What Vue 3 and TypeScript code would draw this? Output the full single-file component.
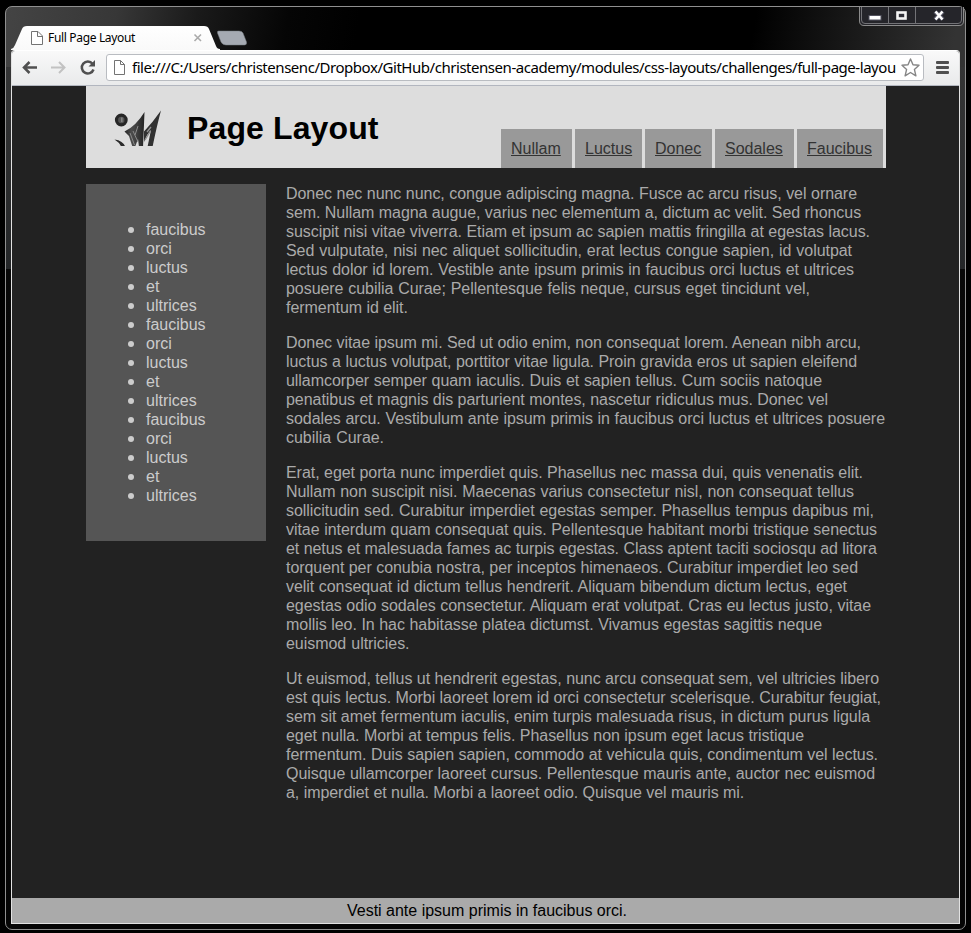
<script setup lang="ts">
interface Line { text: string; width: number }
interface NavItem { label: string; width: number }

const nav: NavItem[] = [
  { label: 'Nullam', width: 71 },
  { label: 'Luctus', width: 67 },
  { label: 'Donec', width: 67 },
  { label: 'Sodales', width: 79 },
  { label: 'Faucibus', width: 86 },
]

const words: string[] = ['faucibus', 'orci', 'luctus', 'et', 'ultrices']
const sideItems: string[] = [...words, ...words, ...words]

const paragraphs: Line[][] = [
  [
    { text: 'Donec nec nunc nunc, congue adipiscing magna. Fusce ac arcu risus, vel ornare', width: 571 },
    { text: 'sem. Nullam magna augue, varius nec elementum a, dictum ac velit. Sed rhoncus', width: 575 },
    { text: 'suscipit nisi vitae viverra. Etiam et ipsum ac sapien mattis fringilla at egestas lacus.', width: 584 },
    { text: 'Sed vulputate, nisi nec aliquet sollicitudin, erat lectus congue sapien, id volutpat', width: 566 },
    { text: 'lectus dolor id lorem. Vestible ante ipsum primis in faucibus orci luctus et ultrices', width: 568 },
    { text: 'posuere cubilia Curae; Pellentesque felis neque, cursus eget tincidunt vel,', width: 524 },
    { text: 'fermentum id elit.', width: 121 },
  ],
  [
    { text: 'Donec vitae ipsum mi. Sed ut odio enim, non consequat lorem. Aenean nibh arcu,', width: 575 },
    { text: 'luctus a luctus volutpat, porttitor vitae ligula. Proin gravida eros ut sapien eleifend', width: 571 },
    { text: 'ullamcorper semper quam iaculis. Duis et sapien tellus. Cum sociis natoque', width: 536 },
    { text: 'penatibus et magnis dis parturient montes, nascetur ridiculus mus. Donec vel', width: 542 },
    { text: 'sodales arcu. Vestibulum ante ipsum primis in faucibus orci luctus et ultrices posuere', width: 599 },
    { text: 'cubilia Curae.', width: 98 },
  ],
  [
    { text: 'Erat, eget porta nunc imperdiet quis. Phasellus nec massa dui, quis venenatis elit.', width: 577 },
    { text: 'Nullam non suscipit nisi. Maecenas varius consectetur nisl, non consequat tellus', width: 568 },
    { text: 'sollicitudin sed. Curabitur imperdiet egestas semper. Phasellus tempus dapibus mi,', width: 588 },
    { text: 'vitae interdum quam consequat quis. Pellentesque habitant morbi tristique senectus', width: 591 },
    { text: 'et netus et malesuada fames ac turpis egestas. Class aptent taciti sociosqu ad litora', width: 590 },
    { text: 'torquent per conubia nostra, per inceptos himenaeos. Curabitur imperdiet leo sed', width: 572 },
    { text: 'velit consequat id dictum tellus hendrerit. Aliquam bibendum dictum lectus, eget', width: 561 },
    { text: 'egestas odio sodales consectetur. Aliquam erat volutpat. Cras eu lectus justo, vitae', width: 585 },
    { text: 'mollis leo. In hac habitasse platea dictumst. Vivamus egestas sagittis neque', width: 536 },
    { text: 'euismod ultricies.', width: 123.5 },
  ],
  [
    { text: 'Ut euismod, tellus ut hendrerit egestas, nunc arcu consequat sem, vel ultricies libero', width: 593 },
    { text: 'est quis lectus. Morbi laoreet lorem id orci consectetur scelerisque. Curabitur feugiat,', width: 595 },
    { text: 'sem sit amet fermentum iaculis, enim turpis malesuada risus, in dictum purus ligula', width: 584 },
    { text: 'eget nulla. Morbi at tempus felis. Phasellus non ipsum eget lacus tristique', width: 518 },
    { text: 'fermentum. Duis sapien sapien, commodo at vehicula quis, condimentum vel lectus.', width: 592 },
    { text: 'Quisque ullamcorper laoreet cursus. Pellentesque mauris ante, auctor nec euismod', width: 589 },
    { text: 'a, imperdiet et nulla. Morbi a laoreet odio. Quisque vel mauris mi.', width: 458 },
  ],
]
</script>

<template>
  <div class="desktop">
    <div class="window">
      <div class="titlebar">
        <svg class="tabs" width="250" height="25" viewBox="0 0 250 25">
          <defs>
            <linearGradient id="tabFill" x1="0" y1="0" x2="0" y2="1">
              <stop offset="0" stop-color="#ffffff" />
              <stop offset="1" stop-color="#f9f9f9" />
            </linearGradient>
          </defs>
          <path d="M0 25V24Q3 23 4 20L11 4Q12 1 16 1H193Q197 1 198 4L205 21Q206 24 209 24V25Z" fill="url(#tabFill)" />
          <path d="M207.500 6H228Q231 6 232 8L235.500 17Q236 20 233.500 20H215Q211.500 20 210 17L206.500 8Q206 6 207.500 6Z" fill="#a5aab2" stroke="#777c83" stroke-width=".5" />
          <path d="M20.500 6.500H27L31.500 11V19.500H20.500ZM26.500 6.500V11.500H31.500" fill="#fff" stroke="#737373" />
          <path d="M183.500 9.500L190 16M190 9.500L183.500 16" stroke="#aaa" stroke-width="1.600" />
        </svg>
        <span class="tab-title">Full Page Layout</span>
        <svg class="controls" width="106" height="20" viewBox="0 0 106 20">
          <path d="M.5 0V14Q.5 18.500 5 18.500H100Q104.500 18.500 104.500 14V0" fill="#25252a" stroke="#8b8b8b" />
          <path d="M2.500 0V13Q2.500 16.500 6 16.500H99Q102.500 16.500 102.500 13V0M29.500 0V17M56.500 0V17" fill="none" stroke="#737377" />
          <rect x="10" y="8.500" width="12" height="4.500" fill="#fff" stroke="#52525e" />
          <rect x="38.500" y="5.500" width="8" height="6" fill="#303038" stroke="#f5f5f5" stroke-width="2.600" />
          <path d="M76 4.500L84 12.500M84 4.500L76 12.500" stroke="#51515f" stroke-width="4.500" />
          <path d="M76.500 4.500L83.500 12.500M83.500 4.500L76.500 12.500" stroke="#fff" stroke-width="2.600" />
        </svg>
      </div>

      <div class="client">
        <div class="toolbar">
          <svg class="buttons" width="94" height="35" viewBox="0 0 94 35">
            <path d="M25 16.500H12M17.500 11L12 16.500L17.500 22" fill="none" stroke="#505050" stroke-width="2.500" />
            <path d="M39 16.500H52M47 11L52.500 16.500L47 22" fill="none" stroke="#c2c2c2" stroke-width="2" />
            <path d="M80.500 12.700A6 6 0 1 0 81.500 18.500" fill="none" stroke="#505050" stroke-width="2.500" />
            <path d="M83 9V15.500H76.500Z" fill="#505050" />
          </svg>
          <div class="address">
            <svg width="25" height="25" viewBox="0 0 25 25">
              <path d="M7.500 5.500H13.500L17.500 9.500V19.500H7.500ZM13.500 5.500V9.500H17.500" fill="#fff" stroke="#737373" />
            </svg>
            <span class="url"><span class="url-text">file:///C:/Users/christensenc/Dropbox/GitHub/christensen-academy/modules/css-layouts/challenges/full-page-layou</span></span>
            <svg class="star" width="24" height="25" viewBox="0 0 24 25">
              <path d="M11.500 4L14 9.800L20 10.300L15.400 14.400L16.900 20.800L11.500 17.500L6.100 20.800L7.600 14.400L3 10.300L9 9.800Z" fill="#fff" stroke="#858585" stroke-width="1.400" stroke-linejoin="round" />
            </svg>
          </div>
          <div class="menu"><i></i><i></i><i></i></div>
        </div>

        <div class="page">
          <header class="header">
            <svg class="logo" width="50" height="42" viewBox="0 0 50 42">
              <defs>
                <linearGradient id="sketchA" x1="0" x2="1" y1="0" y2="0">
                  <stop offset="0" stop-color="#262626" /><stop offset=".35" stop-color="#4c4c4c" /><stop offset=".65" stop-color="#3c3c3c" /><stop offset="1" stop-color="#222" />
                </linearGradient>
                <clipPath id="logoCrop"><rect width="50" height="37" /></clipPath>
                <filter id="pencil"><feGaussianBlur stdDeviation=".35" /></filter>
              </defs>
              <g clip-path="url(#logoCrop)">
                <g filter="url(#pencil)">
                  <circle cx="8.300" cy="11" r="4.800" fill="#555" stroke="#262626" stroke-width="3.200" />
                  <path d="M8.800 8.500V13" stroke="#858585" stroke-width="1.500" />
                  <path d="M11.500 22.500Q23 17 31.500 3L30.800 20L30 38H26L25 30L22 38H19.500L16 27Z" fill="url(#sketchA)" />
                  <path d="M17 24L21.500 36M20 22L25 33M25 17L22 26" stroke="#8a8a8a" stroke-width="1" />
                  <path d="M31 22.500Q40 13 48 1.500Q44 16 39.500 38H34.500L38 21Q34.500 24 31 33Z" fill="#303030" />
                  <path d="M32 31L37.500 22M34 23L38 18" stroke="#909090" stroke-width="1.400" />
                  <path d="M1.500 30.500Q10 31.500 12.500 38H8.500Q6 33 1.500 30.500Z" fill="#292929" />
                </g>
              </g>
            </svg>
            <h1>Page Layout</h1>
            <nav>
              <a v-for="item in nav" :key="item.label" :style="{ width: item.width + 'px' }"><span>{{ item.label }}</span></a>
            </nav>
          </header>
          <div class="columns">
            <aside>
              <ul><li v-for="(item, i) in sideItems" :key="i"><i class="bullet"></i>{{ item }}</li></ul>
            </aside>
            <main>
              <p v-for="(para, i) in paragraphs" :key="i">
                <span v-for="line in para" :key="line.text" class="line" :style="{ width: line.width + 'px' }">{{ line.text }}</span>
              </p>
            </main>
          </div>
          <footer><span>Vesti ante ipsum primis in faucibus orci.</span></footer>
        </div>
      </div>
    </div>
  </div>
</template>

<style>
body { background: #000; }
</style>

<style scoped>
* { box-sizing: border-box; }
.desktop {
  width: 971px;
  height: 933px;
  padding: 6px 5px 3px;
  background: #000;
  overflow: hidden;
  font: 16px/19px "Liberation Sans", Arial, sans-serif;
}
.window {
  width: 961px;
  height: 924px;
  border: 1px solid #8f8f8f;
  border-radius: 7px;
  padding: 0 5px;
  display: flex;
  flex-direction: column;
  background:
    linear-gradient(100deg, #444 0, #373737 110px, #1a1a1a 190px, #050505 280px, #000 350px, #000 740px, #171717 830px, #333 940px) 0 0 / 100% 60px no-repeat,
    linear-gradient(#393939, #242628 262px, #080808 262px, #050505) 0 0 / 100% 100%;
}
.titlebar { height: 43px; flex: none; position: relative; display: flex; align-items: flex-end; }
.tabs { display: block; }
.tab-title {
  position: absolute;
  left: 37px;
  top: 22px;
  font: 12px/18px "Noto Sans", sans-serif;
  letter-spacing: -0.33px;
  color: #000;
  white-space: nowrap;
}
.controls { position: absolute; left: 848px; top: 0; }
.client {
  width: 949px;
  height: 874px;
  border: 1px solid #e2e2e2;
  border-top-color: #fff;
  border-radius: 4px 4px 0 0;
  overflow: hidden;
  display: flex;
  flex-direction: column;
}
.toolbar {
  height: 35px;
  flex: none;
  display: flex;
  align-items: flex-start;
  border-bottom: 1px solid #b2b6bf;
  background: linear-gradient(#f9f9f9, #e9eaeb);
}
.buttons { flex: none; }
.address {
  width: 818px;
  height: 27px;
  margin-top: 3px;
  flex: none;
  display: flex;
  align-items: center;
  border: 1px solid #b9bcc1;
  border-radius: 3px;
  background: #fff;
}
.address svg { flex: none; }
.url {
  width: 767px;
  margin-top: -1px;
  overflow: hidden;
  white-space: nowrap;
  font: 15px/22px "Noto Sans", sans-serif;
  color: #000;
}
.url-text { letter-spacing: -0.46px; }
.menu { width: 13px; margin: 10px 0 0 12px; display: flex; flex-direction: column; gap: 2px; }
.menu i { height: 3px; background: #505050; border-radius: 1px; }
.page { flex: 1; background: #222; display: flex; flex-direction: column; }
.header {
  width: 800px;
  height: 82px;
  margin-left: 74px;
  flex: none;
  display: flex;
  background: #ddd;
  padding-right: 3px;
}
.logo { margin: 23px 0 0 27px; flex: none; }
h1 {
  margin: 24px 0 0 24px;
  width: 192px;
  font-size: 32px;
  line-height: 37px;
  letter-spacing: 0.12px;
  color: #000;
  white-space: nowrap;
}
nav { margin-left: auto; margin-top: 43px; display: flex; gap: 3px; }
nav a { background: #999; height: 39px; padding: 10px; color: #333; text-decoration: underline; }
.columns { display: flex; margin: 16px 0 0 74px; gap: 20px; flex: 1; align-items: flex-start; }
aside { width: 180px; height: 357px; padding: 20px; background: #555; color: #ccc; }
ul { margin: 16px 0; padding-left: 22px; list-style: none; }
li { display: flex; align-items: center; gap: 12px; }
.bullet { width: 6px; height: 6px; border-radius: 50%; background: #ccc; }
main { width: 600px; color: #aaa; }
p { margin: 0 0 16px; }
.line { display: block; white-space: nowrap; letter-spacing: -0.05px; text-align: justify; text-align-last: justify; }
footer { height: 25px; flex: none; background: #aaa; color: #000; text-align: center; line-height: 26px; padding-left: 3px; }
</style>
